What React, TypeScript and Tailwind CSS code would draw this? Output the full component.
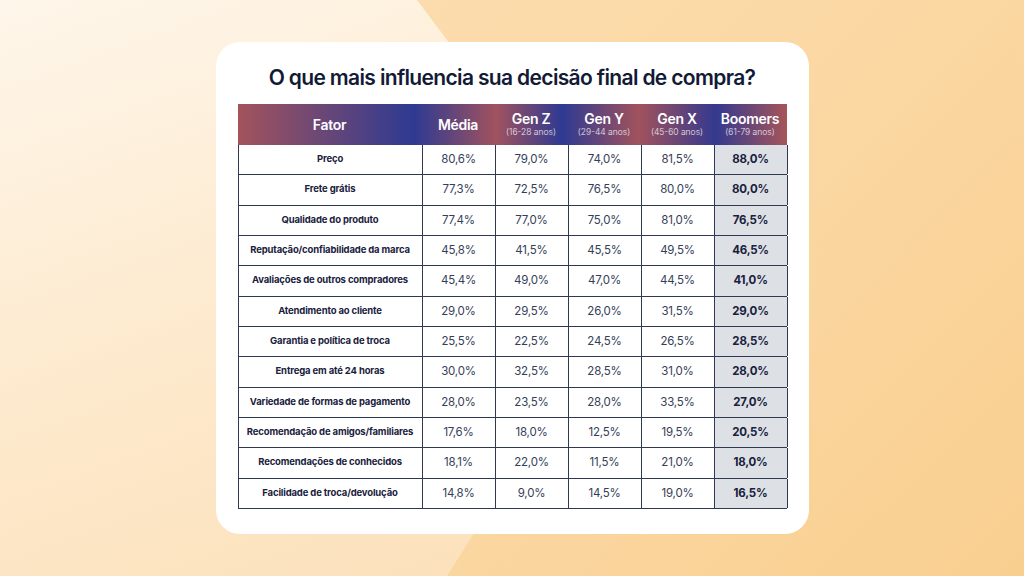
import React from "react";

const rows: [string, string, string, string, string, string][] = [
  ["Preço", "80,6%", "79,0%", "74,0%", "81,5%", "88,0%"],
  ["Frete grátis", "77,3%", "72,5%", "76,5%", "80,0%", "80,0%"],
  ["Qualidade do produto", "77,4%", "77,0%", "75,0%", "81,0%", "76,5%"],
  ["Reputação/confiabilidade da marca", "45,8%", "41,5%", "45,5%", "49,5%", "46,5%"],
  ["Avaliações de outros compradores", "45,4%", "49,0%", "47,0%", "44,5%", "41,0%"],
  ["Atendimento ao cliente", "29,0%", "29,5%", "26,0%", "31,5%", "29,0%"],
  ["Garantia e política de troca", "25,5%", "22,5%", "24,5%", "26,5%", "28,5%"],
  ["Entrega em até 24 horas", "30,0%", "32,5%", "28,5%", "31,0%", "28,0%"],
  ["Variedade de formas de pagamento", "28,0%", "23,5%", "28,0%", "33,5%", "27,0%"],
  ["Recomendação de amigos/familiares", "17,6%", "18,0%", "12,5%", "19,5%", "20,5%"],
  ["Recomendações de conhecidos", "18,1%", "22,0%", "11,5%", "21,0%", "18,0%"],
  ["Facilidade de troca/devolução", "14,8%", "9,0%", "14,5%", "19,0%", "16,5%"],
];

const gens: [string, string][] = [
  ["Gen Z", "(16-28 anos)"],
  ["Gen Y", "(29-44 anos)"],
  ["Gen X", "(45-60 anos)"],
  ["Boomers", "(61-79 anos)"],
];

export default function App() {
  return (
    <div
      className="relative w-[1024px] h-[576px] overflow-hidden bg-[linear-gradient(135deg,#fcdfb4_0%,#fbd9a6_50%,#f9cf90_100%)]"
      style={{ fontFamily: "Inter, 'Noto Sans', sans-serif" }}
    >
      <div className="absolute inset-0 bg-[linear-gradient(160deg,#fef6ea_0%,#fde9cc_45%,#fbdcb0_100%)] [clip-path:polygon(0_0,417px_0,492px_100px,495px_500px,447px_576px,0_576px)]" />
      <div className="relative flex h-full w-full items-center justify-center">
        <div className="flex w-[593px] h-[492px] flex-col items-center rounded-[24px] bg-white pt-[21px]">
          <h1 className="h-[30px] text-[21px] leading-[30px] font-semibold tracking-[-0.65px] text-[#121a36]">
            O que mais influencia sua decisão final de compra?
          </h1>
          <div className="mt-[11px] w-[549px]">
            <div className="grid h-[41px] grid-cols-[184px_73px_73px_73px_73px_73px] items-center bg-[linear-gradient(90deg,#a3535c_0%,#2e3a92_32%,#a1525e_47%,#2e3a92_59%,#a1525c_73%,#34398f_87%,#a6555a_100%)] text-white">
              <div className="text-center text-[14px] font-semibold tracking-[-0.3px]">Fator</div>
              <div className="text-center text-[14px] font-semibold tracking-[-0.3px]">Média</div>
              {gens.map(([g, s]) => (
                <div key={g} className="flex flex-col items-center">
                  <span className="text-[14px] leading-[16px] font-semibold tracking-[-0.3px]">{g}</span>
                  <span className="text-[8.5px] leading-[11px] font-light text-white/85">{s}</span>
                </div>
              ))}
            </div>
            <div className="border-l border-[#2f3953]">
              {rows.map((r) => (
                <div
                  key={r[0]}
                  className="grid h-[30.33px] grid-cols-[184px_73px_73px_73px_73px_73px] border-b border-[#2f3953]"
                >
                  <div className="flex items-center justify-center border-r border-[#2f3953] pb-[1px] text-[9.5px] font-bold tracking-[-0.15px] text-[#19213c]">
                    {r[0]}
                  </div>
                  {r.slice(1, 5).map((v, i) => (
                    <div
                      key={i}
                      className="flex items-center justify-center border-r border-[#2f3953] text-[11.5px] tracking-[-0.2px] text-[#353e57]"
                    >
                      {v}
                    </div>
                  ))}
                  <div className="flex items-center justify-center border-r border-[#2f3953] bg-[#dde1e6] text-[11.5px] font-bold tracking-[-0.2px] text-[#19213c]">
                    {r[5]}
                  </div>
                </div>
              ))}
            </div>
          </div>
        </div>
      </div>
    </div>
  );
}
